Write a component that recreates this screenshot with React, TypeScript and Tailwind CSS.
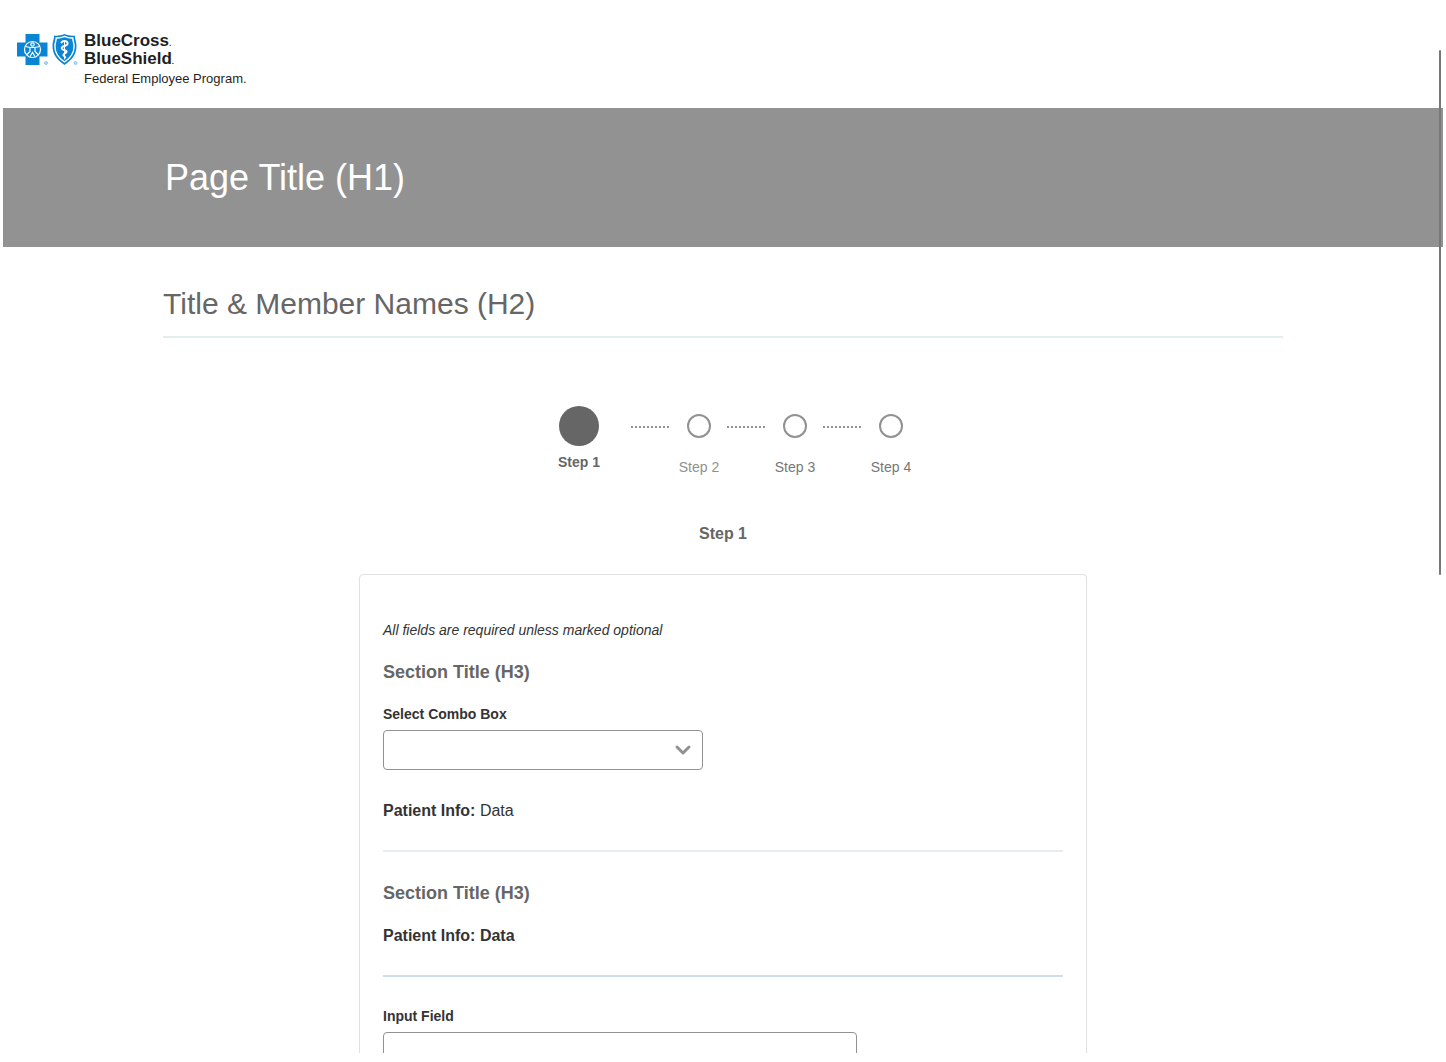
import { ChevronDown } from 'lucide-react'

const nextSteps = [
  { label: 'Step 2', color: 'text-[#919191]' },
  { label: 'Step 3', color: 'text-[#777777]' },
  { label: 'Step 4', color: 'text-[#777777]' },
]

function CrossLogo() {
  return (
    <svg width="32" height="32" viewBox="0 0 32 32" aria-hidden="true">
      <path d="M8.500 0h14v8.500h8v14h-8V31h-14v-8.500H0v-14h8.500z" fill="#0a85d4" />
      <g fill="none" stroke="#fff" strokeWidth="1.200">
        <circle cx="15.500" cy="15.500" r="8" />
        <circle cx="15.500" cy="10.500" r="1.700" />
        <path d="M8.500 12.500l4.500 1h5l4.500-1M13 13.500v4L9.500 21M18 13.500v4l3.500 3.500M13 22.500l2.500-4 2.500 4" />
      </g>
      <circle cx="29" cy="29" r="1.500" fill="#b5dbf2" stroke="#7dbfe8" strokeWidth="0.800" />
    </svg>
  )
}

function ShieldLogo() {
  return (
    <svg width="26" height="32" viewBox="0 0 26 32" aria-hidden="true">
      <path
        d="M2 1.500C5.500 2 9 1.500 12.500 0 16 1.500 19.500 2 23 1.500c-.4 3.500 1.500 5.500 1.500 10.500 0 8.500-4.500 14-12 19C5 26 .5 20.500.5 12 .5 7 2.400 5 2 1.500z"
        fill="#0a85d4"
      />
      <path
        d="M4.200 4c2.800.2 5.600-.4 8.300-1.600C15.200 3.600 18 4.200 20.800 4c-.1 2.800 1.300 4.700 1.300 8.200 0 6.700-3.600 11.800-9.600 15.800-6-4-9.600-9.100-9.600-15.800C2.900 8.700 4.300 6.800 4.200 4z"
        fill="none"
        stroke="#fff"
        strokeWidth="1.400"
      />
      <g fill="none" stroke="#fff" strokeLinecap="round">
        <path d="M12.500 7v18" strokeWidth="1" />
        <path
          d="M9.500 8.500c1-2 5-2 6 0 .8 2-1 3-3 3.500s-3.500 1.500-2.500 3c1 1.300 4.500.8 4.700 2.700.1 1.600-3.400 1.700-3.400 3.300 0 1.200 2 1.200 2 2.400"
          strokeWidth="1.900"
        />
      </g>
      <circle cx="23.500" cy="29" r="1.500" fill="#b5dbf2" stroke="#7dbfe8" strokeWidth="0.800" />
    </svg>
  )
}

function Header() {
  return (
    <header className="h-[108px] px-3.5 pt-[34px]">
      <a href="#" className="inline-flex items-start text-[#1f1f1f]">
        <CrossLogo />
        <span className="ml-[3px]">
          <ShieldLogo />
        </span>
        <span className="-mt-0.5 ml-1.5 flex flex-col">
          <span className="flex items-baseline text-[17px] leading-[18px] font-bold">
            BlueCross<span className="text-[8px] leading-none">.</span>
          </span>
          <span className="flex items-baseline text-[17px] leading-[18px] font-bold">
            BlueShield<span className="text-[8px] leading-none">.</span>
          </span>
          <span className="mt-0.5 text-[13px] leading-[17px]">Federal Employee Program.</span>
        </span>
      </a>
    </header>
  )
}

function Stepper() {
  return (
    <ol className="mt-[68px] flex justify-center gap-2 text-sm">
      <li className="flex w-[88px] flex-col items-center gap-1.5 font-bold text-[#666666]" aria-current="step">
        <span className="size-10 rounded-full bg-[#666666]" />
        Step 1
      </li>
      {nextSteps.map((step) => (
        <li key={step.label} className="flex gap-2.5 pt-2">
          <span className="mt-3 w-[38px] border-t-2 border-dotted border-[#919191]" />
          <span className={`flex w-10 flex-col items-center gap-[19px] whitespace-nowrap ${step.color}`}>
            <span className="size-6 rounded-full border-2 border-[#919191]" />
            {step.label}
          </span>
        </li>
      ))}
    </ol>
  )
}

export default function App() {
  return (
    <div className="h-screen bg-white px-[3px] pb-[9px] font-['Liberation_Sans',Arial,sans-serif] text-[#333333]">
      <div className="relative h-full overflow-hidden">
        <Header />

        <div className="bg-[#929292] py-[45px]">
          <h1 className="mx-auto max-w-[1120px] pl-0.5 text-4xl leading-[49px] text-white">Page Title (H1)</h1>
        </div>

        <main className="mx-auto max-w-[1120px] pt-[37px]">
          <h2 className="border-b-2 border-[#e3eeef] pb-3 text-[30px] leading-10 text-[#666666]">
            Title &amp; Member Names (H2)
          </h2>

          <Stepper />

          <h3 className="mt-[45px] text-center font-bold text-[#666666]">Step 1</h3>

          <form className="mx-auto mt-7 max-w-[728px] rounded border border-[#e1e1e1] px-[23px] pt-[45px] pb-12">
            <p className="text-sm italic">All fields are required unless marked optional</p>

            <h3 className="mt-5 text-lg leading-6 font-bold text-[#666666]">Section Title (H3)</h3>
            <label htmlFor="combo" className="mt-5 block text-sm font-bold">
              Select Combo Box
            </label>
            <div className="relative mt-1.5 max-w-80">
              <select id="combo" className="block h-10 w-full appearance-none rounded border border-[#919191] bg-white px-3">
                <option value=""></option>
              </select>
              <ChevronDown
                className="pointer-events-none absolute top-2 right-2 text-[#919191]"
                size={24}
                strokeWidth={3}
              />
            </div>
            <p className="mt-[29px]">
              <strong>Patient Info:</strong> Data
            </p>

            <hr className="mt-[27px] border-t-2 border-[#e6edf2]" />

            <h3 className="mt-[29px] text-lg leading-6 font-bold text-[#666666]">Section Title (H3)</h3>
            <p className="mt-[19px] font-bold">Patient Info: Data</p>

            <hr className="mt-[27px] border-t-2 border-[#cddfe7]" />

            <label htmlFor="field" className="mt-[29px] block text-sm font-bold">
              Input Field
            </label>
            <input
              id="field"
              type="text"
              className="mt-1.5 block h-10 w-full max-w-[474px] rounded border border-[#919191] px-3"
            />
          </form>
        </main>

        {/* page scroll thumb */}
        <div className="absolute top-[50px] right-0.5 h-[525px] w-0.5 rounded-full bg-[#777777]" />
      </div>
    </div>
  )
}
